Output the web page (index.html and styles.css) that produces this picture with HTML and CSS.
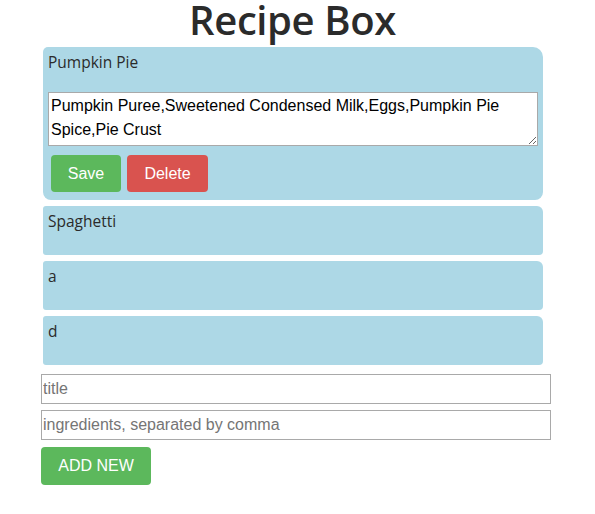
FILE: index.html
```html
<!DOCTYPE html>
<html>
<head>
<meta charset="utf-8">
<link rel="stylesheet" href="styles.css">
</head>
<body>
<h1 class="title">Recipe Box</h1>
<div class="box">
  <div class="recipes">
    <div class="card card-open">
      <div class="card-title">Pumpkin Pie</div>
      <textarea class="ingredients">Pumpkin Puree,Sweetened Condensed Milk,Eggs,Pumpkin Pie Spice,Pie Crust</textarea>
      <div class="actions">
        <button class="btn btn-save">Save</button>
        <button class="btn btn-delete">Delete</button>
      </div>
    </div>
    <div class="card"><div class="card-title">Spaghetti</div></div>
    <div class="card"><div class="card-title">a</div></div>
    <div class="card"><div class="card-title">d</div></div>
  </div>
  <div class="form">
    <input class="field" type="text" placeholder="title">
    <input class="field" type="text" placeholder="ingredients, separated by comma">
    <button class="btn btn-add">ADD NEW</button>
  </div>
</div>
</body>
</html>
```
FILE: styles.css
```css
html, body {
  margin: 0;
  padding: 0;
  background: #fff;
}
body {
  width: 595px;
  height: 514px;
  overflow: hidden;
}
.title {
  margin: 0;
  padding: 4px 10px 0 0;
  font-family: "Open Sans", "Noto Sans", sans-serif;
  font-weight: 600;
  font-size: 40px;
  line-height: 32px;
  height: 32px;
  color: #2b2b2b;
  text-align: center;
  letter-spacing: -0.4px;
}
.box {
  margin-left: 41px;
  width: 510px;
}
.recipes {
  margin-top: 11px;
  margin-left: 2px;
  width: 500px;
  display: flex;
  flex-direction: column;
  gap: 6px;
}
.card {
  background: #add8e6;
  padding: 5px;
  border-radius: 3px 6px 4px 3px;
}
.card-open {
  border-radius: 5px 10px 8px 8px;
}
.card-title {
  font-family: "Open Sans", "Noto Sans", sans-serif;
  font-size: 15.5px;
  line-height: 20px;
  height: 39px;
  color: #2b2b2b;
}
.ingredients {
  display: block;
  box-sizing: border-box;
  margin: 1px 0 0 0;
  width: 490px;
  height: 54px;
  border: 1px solid #a9a9a9;
  padding: 1px 2px;
  font-family: "Liberation Sans", Arial, sans-serif;
  font-size: 16px;
  line-height: 24px;
  color: #000;
  background: #fff;
  resize: both;
}
.actions {
  display: flex;
  gap: 6px;
  margin: 9px 0 3px 3px;
}
.btn {
  border: none;
  border-radius: 4px;
  color: #fff;
  font-family: "Liberation Sans", Arial, sans-serif;
  font-size: 16px;
  padding: 0;
  cursor: pointer;
}
.btn-save {
  background: #5cb85c;
  width: 70px;
  height: 37px;
}
.btn-delete {
  background: #d9534f;
  width: 81px;
  height: 37px;
}
.form {
  margin-top: 9px;
  display: flex;
  flex-direction: column;
  align-items: flex-start;
  gap: 6px;
}
.field {
  box-sizing: border-box;
  width: 510px;
  height: 30px;
  margin: 0;
  border: 1px solid #a9a9a9;
  padding: 1px 1px;
  font-family: "Liberation Sans", Arial, sans-serif;
  font-size: 16px;
  color: #000;
  outline: none;
}
.field::placeholder {
  color: #757575;
}
.btn-add {
  margin-top: 1px;
  background: #5cb85c;
  width: 110px;
  height: 38px;
}
```
